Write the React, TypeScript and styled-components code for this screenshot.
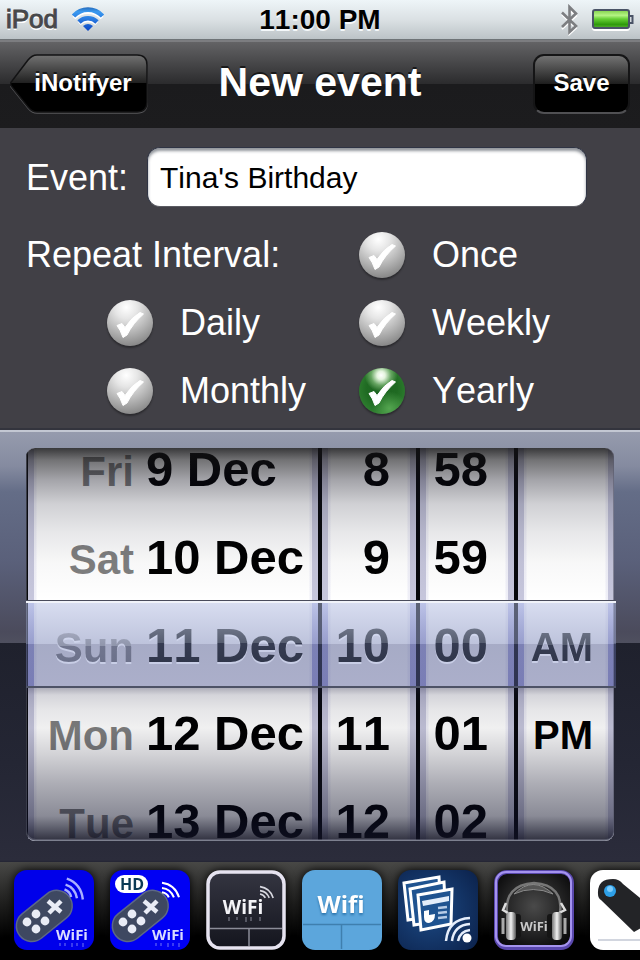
import React, { useState } from "react";
import styled, { createGlobalStyle } from "styled-components";

const GlobalStyle = createGlobalStyle`
  *, *::before, *::after { box-sizing: border-box; }
  body {
    margin: 0;
    background: #000;
    font-family: "Liberation Sans", Arial, Helvetica, sans-serif;
    font-kerning: none;
  }
  button, input { font: inherit; font-kerning: none; }
`;

const Screen = styled.main`
  display: flex;
  flex-direction: column;
  min-height: 100vh;
  overflow: hidden;
`;

/* ---------- status bar ---------- */

const StatusBar = styled.header`
  display: grid;
  grid-template-columns: 1fr auto 1fr;
  align-items: center;
  height: 40px;
  padding: 0 6px 0;
  background: linear-gradient(#eef5f8, #dbe1e4 50%, #bcc3c7);
  border-bottom: 1px solid #6f7477;
`;

const Carrier = styled.div`
  display: flex;
  align-items: center;
  gap: 13px;
  font-size: 26px;
  color: #47484a;
  -webkit-text-stroke: 1px #47484a;
  text-shadow: 0 2px 0 #fff;
`;

const Clock = styled.time`
  font-size: 28px;
  font-weight: bold;
  color: #000;
  text-shadow: 0 2px 0 #f4f8fa;
`;

const Indicators = styled.div`
  display: flex;
  justify-content: flex-end;
  align-items: center;
  gap: 13px;
`;

/* ---------- navigation bar ---------- */

const NavBar = styled.nav`
  display: grid;
  grid-template-columns: 1fr auto 1fr;
  align-items: center;
  height: 88px;
  padding: 0 10px 2px;
  background: linear-gradient(#636365, #2b2b2d 42px, #1b1b1d 42px, #1c1c1e);
  border-top: 2px solid #7c7d80;
`;

const NavTitle = styled.h1`
  margin: 0;
  padding-bottom: 5px;
  font-size: 41px;
  line-height: 48px;
  color: #fff;
  text-shadow: 0 -2px 0 rgba(0, 0, 0, 0.6);
`;

const NavButton = styled.button`
  height: 60px;
  border: 0;
  font-size: 24px;
  font-weight: bold;
  color: #fff;
  text-shadow: 0 -2px 0 rgba(0, 0, 0, 0.6);
  cursor: pointer;
`;

const BackButton = styled(NavButton)`
  position: relative;
  justify-self: start;
  width: 138px;
  padding: 0 16px 2px 24px;
  background: none;
`;

const BackShape = styled.svg`
  position: absolute;
  inset: 0;
  z-index: -1;
`;

const BackLayer = styled.div`
  isolation: isolate;
`;

const SaveButton = styled(NavButton)`
  justify-self: end;
  width: 97px;
  padding: 0 0 2px;
  border: 2px solid #151516;
  border-bottom-color: #505053;
  border-radius: 11px;
  background: linear-gradient(#727272, #1e1e1e 50%, #000 50%, #000);
`;

/* ---------- form ---------- */

const Form = styled.form`
  display: flex;
  flex-direction: column;
  gap: 14px;
  padding: 19px 26px 5px;
  background: #414046;
  color: #fff;
  font-size: 36px;
`;

const EventRow = styled.div`
  display: flex;
  align-items: center;
  padding-right: 27px;
`;

const EventLabel = styled.label`
  width: 121px;
  padding-top: 2px;
`;

const EventInput = styled.input`
  flex: 1;
  min-width: 0;
  height: 60px;
  padding: 2px 12px 0;
  border: 1px solid #2f3444;
  border-bottom-color: #5a5b62;
  border-radius: 13px;
  background: #fff;
  box-shadow: inset 0 3px 3px rgba(40, 48, 60, 0.5);
  font-size: 30px;
  color: #000;
  outline: none;
`;

const IntervalGrid = styled.div`
  display: grid;
  grid-template-columns: 333fr 255fr;
  grid-auto-rows: 68px;
  align-items: center;
`;

const Option = styled.label<{ $indent?: boolean }>`
  display: flex;
  align-items: center;
  gap: 27px;
  padding-left: ${(p) => (p.$indent ? 81 : 0)}px;
  cursor: pointer;
`;

const Ball = styled.span`
  display: grid;
  width: 46px;
  height: 46px;
  & > * { grid-area: 1 / 1; }
`;

const BallInput = styled.input`
  appearance: none;
  width: 46px;
  height: 46px;
  margin: 0;
  border-radius: 50%;
  background: radial-gradient(circle at 42% 16%, #fff 0, #e6e6e6 24%, #b9b9b9 52%, #8c8c8c 80%, #777 100%);
  box-shadow: 0 2px 2px rgba(0, 0, 0, 0.35);
  cursor: pointer;
  &:checked {
    background:
      radial-gradient(circle at 48% 16%, #fff 0, #e4f4de 9%, rgba(150, 205, 140, 0.6) 22%, transparent 36%),
      radial-gradient(circle at 66% 88%, #54a650 0, transparent 34%),
      radial-gradient(circle at 50% 45%, #1d6420 0, #1f6a22 45%, #2d7c2e 72%, #1b561f 100%);
  }
`;

const Check = styled.svg`
  width: 46px;
  height: 46px;
  pointer-events: none;
`;

/* ---------- picker ---------- */

const Picker = styled.section`
  padding: 16px 26px 21px;
  border-top: 2px solid #c3c7d2;
  background:
    linear-gradient(#969bad 0, #858ba0 34px, #646d87 60px, #5a607a 130px, #4b4b5c 200px, #4f505f 211px, #1f212d 211px, #242634 330px, #2b2c3b 428px, #232433 430px);
  box-shadow: 0 -2px 0 #33343d;
`;

const Wheels = styled.div`
  position: relative;
  isolation: isolate;
  margin-right: -2px;
`;

const Columns = styled.div`
  display: grid;
  grid-template-columns: 290fr 94fr 94fr 96fr;
  gap: 4px;
  height: 393px;
  margin-right: 2px;
  padding-left: 2px;
  overflow: hidden;
  border-radius: 9px;
  background: #07080c;
`;

const Shade = styled.div`
  position: absolute;
  inset: 0 2px 0 0;
  z-index: 1;
  border-radius: 9px;
  border-bottom: 1px solid #7d808f;
  box-shadow: inset 1px -1px 0 rgba(150, 152, 170, 0.35), inset -1px 0 0 rgba(90, 92, 110, 0.6);
  pointer-events: none;
  background:
    linear-gradient(
      rgba(18, 18, 20, 0.84) 0,
      rgba(20, 20, 24, 0.6) 12px,
      rgba(16, 16, 30, 0.38) 32px,
      rgba(20, 22, 40, 0.2) 56px,
      rgba(20, 22, 40, 0.1) 84px,
      rgba(20, 20, 30, 0.03) 115px,
      rgba(20, 20, 30, 0) 152px,
      rgba(30, 30, 60, 0) 239px,
      rgba(30, 30, 60, 0.36) 240px,
      rgba(20, 20, 50, 0.18) 247px,
      rgba(10, 10, 30, 0.1) 262px,
      rgba(0, 0, 10, 0.06) 280px,
      rgba(10, 10, 30, 0.18) 306px,
      rgba(16, 17, 40, 0.34) 335px,
      rgba(10, 12, 36, 0.48) 368px,
      rgba(14, 16, 36, 0.7) 382px,
      rgba(16, 17, 34, 0.86) 392px
    );
`;

const Band = styled.div`
  position: absolute;
  left: 0;
  right: 0;
  top: 153px;
  height: 87px;
  z-index: 2;
  border-top: 2px solid #f1f3fa;
  border-bottom: 2px solid #4d5266;
  box-shadow: 0 -1px 0 #4a4c5c;
  pointer-events: none;
  background: linear-gradient(
    rgba(177, 187, 225, 0.5) 0,
    rgba(142, 152, 194, 0.58) 41px,
    rgba(85, 94, 145, 0.52) 41px,
    rgba(88, 95, 150, 0.5) 100%
  );
`;

const edge =
  "linear-gradient(#c6c6dc 152px, #c9cdf0 153px, #a8a8dc 194px, #9b9bd6 239px, #c6c6dc 240px)";

const Column = styled.ul`
  min-width: 0;
  height: 393px;
  margin: 0;
  padding: 0 6px;
  list-style: none;
  background:
    ${edge} left / 6px 100% no-repeat,
    ${edge} right / 6px 100% no-repeat,
    linear-gradient(90deg, #f0f0f8 8px, #fff 9px, #fff calc(100% - 9px), #f0f0f8 calc(100% - 8px));
`;

const WheelItem = styled.li<{ $half?: boolean }>`
  display: flex;
  justify-content: flex-end;
  align-items: baseline;
  height: 88px;
  padding-top: ${(p) => (p.$half ? 2 : 0)}px;
  padding-right: ${(p) => (p.$half ? 15 : 20)}px;
  line-height: 88px;
  font-size: ${(p) => (p.$half ? 40 : 49)}px;
  font-weight: bold;
  white-space: nowrap;
  color: #000;
  &:first-child { margin-top: -23px; }
  &[aria-selected="true"] {
    position: relative;
    z-index: 3;
    filter: drop-shadow(0 2px 0 rgba(214, 219, 242, 0.7));
  }
`;

const DateItem = styled(WheelItem)`
  justify-content: flex-start;
  gap: 12px;
  padding-right: 0;
`;

const Value = styled.span`
  display: block;
  [aria-selected="true"] > & {
    color: transparent;
    background: linear-gradient(#6c7386 28px, #565d70 42px, #363c52 42px, #30364a 62px);
    background-clip: text;
    -webkit-background-clip: text;
  }
`;

const Day = styled.span`
  display: block;
  width: 100px;
  font-size: 42px;
  text-align: right;
  color: rgba(0, 0, 0, 0.5);
  [aria-selected="true"] > & {
    color: transparent;
    background: linear-gradient(#a3a8bd 28px, #8f95ab 42px, #71768f 42px, #6b7089 62px);
    background-clip: text;
    -webkit-background-clip: text;
  }
`;

/* ---------- app strip ---------- */

const Strip = styled.footer`
  display: flex;
  flex: 1;
  gap: 16px;
  min-height: 98px;
  padding: 8px 0 10px 14px;
  overflow: hidden;
  background: linear-gradient(#484846, #20201f 40px, #000 76px);
`;

const AppLink = styled.a`
  flex: none;
  width: 80px;
  height: 80px;
  border-radius: 13px;
  filter: drop-shadow(0 0 5px #000);
  & > svg { display: block; }
`;

const IconText = styled.text<{ $shadow?: string }>`
  font-family: "Open Sans", "Liberation Sans", sans-serif;
  font-weight: 700;
  text-anchor: middle;
  filter: ${(p) => (p.$shadow ? `drop-shadow(0 2px 1px ${p.$shadow})` : "none")};
`;

/* ---------- drawings ---------- */

const WifiGlyph = () => (
  <svg width="34" height="26" viewBox="0 0 34 26" aria-label="Wi-Fi">
    <defs>
      <linearGradient id="wifi" x1="0" y1="0" x2="0" y2="24" gradientUnits="userSpaceOnUse">
        <stop offset="0" stopColor="#2468b8" />
        <stop offset=".2" stopColor="#3b9af0" />
        <stop offset="1" stopColor="#0a45c4" />
      </linearGradient>
    </defs>
    <g transform="translate(1 2)" fill="none" stroke="#fff" strokeWidth="4">
      <path d="M2 9C9.500 1 22.500 1 30 9M7.300 14.500C12 10 20 10 24.700 14.500" />
    </g>
    <g transform="translate(1 0)">
      <g fill="none" stroke="url(#wifi)" strokeWidth="4.600">
        <path d="M1.500 9C9.500 0.500 22.500 0.500 30.500 9" />
        <path d="M7 15C12 10 20 10 25 15" />
      </g>
      <path d="M11 19Q16 15 21 19L16 24Z" fill="url(#wifi)" />
    </g>
  </svg>
);

const BluetoothGlyph = () => (
  <svg width="19" height="32" viewBox="0 0 19 32" aria-label="Bluetooth">
    <path d="M2 9.500 16 23 9.500 29V5L16 11 2 24" transform="translate(0 1)" fill="none" stroke="#fff" strokeWidth="2" />
    <path d="M2 8.500 16 22 9.500 28V3L16 9.500 2 23" fill="none" stroke="#7c7e81" strokeWidth="2.600" />
  </svg>
);

const BatteryGlyph = () => (
  <svg width="42" height="22" viewBox="0 0 42 22" aria-label="Battery full">
    <defs>
      <linearGradient id="bat" x1="0" y1="0" x2="0" y2="1">
        <stop offset="0" stopColor="#7fd048" />
        <stop offset=".3" stopColor="#b4f383" />
        <stop offset=".5" stopColor="#66cf34" />
        <stop offset=".8" stopColor="#2f9a0c" />
        <stop offset="1" stopColor="#56b030" />
      </linearGradient>
    </defs>
    <rect x="1" y="3" width="36" height="18" rx="2" fill="none" stroke="#fff" strokeWidth="2" />
    <rect x="1" y="1" width="36" height="18" rx="2" fill="url(#bat)" stroke="#4a5366" strokeWidth="2" />
    <path d="M38 7h2.500v7H38" fill="#d5dade" stroke="#4a5366" strokeWidth="2" />
  </svg>
);

const CheckMark = () => (
  <Check viewBox="0 0 46 46" aria-hidden="true">
    <path d="M10 25.500 15 23.500 18 27.500Q25 17 33 12.500L36.500 14Q26 23 20 35L16 37.500Q13.500 30 10 25.500Z" fill="#fff" stroke="#fff" strokeLinejoin="round" />
  </Check>
);

const Waves = ({ x, y, s = 1, color = "#fff" }: { x: number; y: number; s?: number; color?: string }) => (
  <g transform={`translate(${x} ${y}) scale(${s})`} fill="none" stroke={color} strokeWidth="2.400">
    <path d="M0 1Q15 3 20 18" />
    <path d="M0 7Q10 8 14 18" />
    <path d="M0 12Q6 13 8 18" />
  </g>
);

const Gamepad = () => (
  <g>
    <g transform="rotate(-39 31 46)">
      <rect x="-1" y="30" width="63" height="31" rx="15.500" fill="#3e4861" stroke="#5d6886" strokeWidth="1.500" />
    </g>
    <path d="M34 31 47 42M47 31 35 43" stroke="#e9ecf6" strokeWidth="4.500" />
    <g fill="#e9ecf6">
      <circle cx="22" cy="44" r="4.400" />
      <circle cx="13" cy="52" r="4.400" />
      <circle cx="31" cy="51" r="4.400" />
      <circle cx="22" cy="59" r="4.400" />
    </g>
  </g>
);

const RemoteIcon = ({ hd }: { hd?: boolean }) => (
  <svg width="80" height="80" viewBox="0 0 80 80">
    <rect width="80" height="80" rx="13" fill={hd ? "#0000f4" : "#0000ea"} />
    <Gamepad />
    {hd ? (
      <>
        <Waves x={52} y={12} s={0.85} />
        <rect x="5" y="5" width="33" height="18" rx="9" fill="#fff" />
        <IconText x="22" y="20" fontSize="16" fill="#0b3a55">HD</IconText>
      </>
    ) : (
      <g transform="rotate(12 58 18)"><Waves x={51} y={9} color="#aab0ff" /></g>
    )}
    <IconText x="58" y="70" fontSize="15" fill="#d9dcff">WiFi</IconText>
    <path d="M46 73v3M51 73v3M58 73v4M63 73v3M69 73v4" stroke="#8085f5" strokeWidth="1.500" opacity=".6" />
  </svg>
);

const TrackpadIcon = () => (
  <svg width="80" height="80" viewBox="0 0 80 80">
    <defs>
      <linearGradient id="pad" x1="0" y1="0" x2="0" y2="1">
        <stop offset="0" stopColor="#343541" />
        <stop offset="1" stopColor="#14151e" />
      </linearGradient>
    </defs>
    <rect x="2" y="2" width="76" height="76" rx="12" fill="url(#pad)" stroke="#e6e3f0" strokeWidth="3.500" />
    <path d="M4 58.500H76M43 59V76" stroke="#8b8c98" strokeWidth="1.500" />
    <IconText x="37" y="44" fontSize="19" fill="#f4f4f8">WiFi</IconText>
    <path d="M23 47v4M31 47v3M40 47v5M45 47v4M54 47v4" stroke="#8d8e9c" strokeWidth="2" opacity=".5" />
    <Waves x={54} y={16} s={0.66} color="#d8d8e0" />
  </svg>
);

const WifiPadIcon = () => (
  <svg width="80" height="80" viewBox="0 0 80 80">
    <rect width="80" height="80" rx="13" fill="#5ca6dc" />
    <path d="M1 54.500H79M39.500 55V79" stroke="#3f7fae" strokeWidth="1.500" />
    <IconText x="39" y="43" fontSize="24" fill="#fff" $shadow="#2e76ad">Wifi</IconText>
  </svg>
);

const SlidesIcon = () => (
  <svg width="80" height="80" viewBox="0 0 80 80">
    <defs>
      <radialGradient id="sl" cx=".4" cy=".5" r=".7">
        <stop offset="0" stopColor="#1c4a85" />
        <stop offset="1" stopColor="#0d2550" />
      </radialGradient>
    </defs>
    <rect width="80" height="80" rx="13" fill="url(#sl)" />
    <g fill="#1f5390" stroke="#fff" strokeWidth="3">
      <path d="M6 13 41 7 43 45 10 50Z" />
      <path d="M12 19 46 12 48 50 16 55Z" />
      <path d="M20 25 54 19 53 54 23 60Z" />
    </g>
    <path d="M24 31 51 26V31L25 36Z" fill="#e3edfa" />
    <path d="M26 41 31 40V45L37 44Q37 52 31 53Q26 53 26 47Z" fill="#fff" />
    <path d="M40 38 49 37M40 43 49 42M40 48 49 47" stroke="#b6cbe6" strokeWidth="2.500" />
    <g fill="none" stroke="#e6eefb" strokeWidth="2.500">
      <path d="M48 71Q50 49 72 48" />
      <path d="M54 71Q56 55 72 54" />
      <path d="M60 71Q62 61 72 60" />
    </g>
    <circle cx="69" cy="68" r="4.500" fill="#fff" />
  </svg>
);

const HeadphonesIcon = () => (
  <svg width="80" height="80" viewBox="0 0 80 80">
    <defs>
      <radialGradient id="hp" cx=".5" cy=".45" r=".6">
        <stop offset="0" stopColor="#4a4a4a" />
        <stop offset="1" stopColor="#0b0b0c" />
      </radialGradient>
      <linearGradient id="cup">
        <stop offset="0" stopColor="#777" />
        <stop offset=".5" stopColor="#f2f2f2" />
        <stop offset="1" stopColor="#555" />
      </linearGradient>
    </defs>
    <rect x="2" y="2" width="76" height="76" rx="11" fill="url(#hp)" stroke="#5a48ae" strokeWidth="4" />
    <rect x="2" y="2" width="75" height="74" rx="10" fill="none" stroke="#a493ee" strokeWidth="2" />
    <path d="M13 44Q10 15 40 13Q70 15 66 44" fill="none" stroke="#777" strokeWidth="2.500" />
    <path d="M20 24Q39 5 59 24Q39 15 20 24Z" fill="#555" stroke="#8a8a8a" />
    <path d="M12 33 9 40 14 43M67 33 71 40 65 43" fill="none" stroke="#ddd" strokeWidth="2.500" />
    <rect x="20" y="44" width="7" height="24" rx="3" fill="#151515" />
    <rect x="53" y="44" width="7" height="24" rx="3" fill="#151515" />
    <rect x="12" y="42" width="10" height="28" rx="4" fill="url(#cup)" />
    <rect x="58" y="42" width="10" height="28" rx="4" fill="url(#cup)" />
    <path d="M9 48V64M71 48V64" stroke="#aaa" strokeWidth="3" />
    <IconText x="40" y="61" fontSize="13" fill="#c9c9c9">WiFi</IconText>
  </svg>
);

const PointerIcon = () => (
  <svg width="80" height="80" viewBox="0 0 80 80">
    <rect width="80" height="80" rx="13" fill="#fff" />
    <path d="M8 70H80" stroke="#c3c9d4" strokeWidth="1.500" />
    <path d="M8 24Q7 9 23 9Q29 9 33 14L72 46L44 62 11 30Q8 28 8 24Z" fill="#232427" />
    <circle cx="20" cy="21" r="6" fill="#2ea0e8" />
    <circle cx="20" cy="19" r="3" fill="#7dcbfa" />
  </svg>
);

/* ---------- data ---------- */

const INTERVALS = ["Once", "Daily", "Weekly", "Monthly", "Yearly"];
const DATES = [
  ["Fri", "9 Dec"],
  ["Sat", "10 Dec"],
  ["Sun", "11 Dec"],
  ["Mon", "12 Dec"],
  ["Tue", "13 Dec"],
];
const HOURS = ["8", "9", "10", "11", "12"];
const MINUTES = ["58", "59", "00", "01", "02"];
const HALVES = ["", "", "AM", "PM"];
const APPS = [
  { name: "Game remote", icon: <RemoteIcon /> },
  { name: "Game remote HD", icon: <RemoteIcon hd /> },
  { name: "Trackpad", icon: <TrackpadIcon /> },
  { name: "Wifi pad", icon: <WifiPadIcon /> },
  { name: "Slides", icon: <SlidesIcon /> },
  { name: "Headphones", icon: <HeadphonesIcon /> },
  { name: "Pointer", icon: <PointerIcon /> },
];

export default function App() {
  const [title, setTitle] = useState("Tina's Birthday");
  const [interval, setRepeat] = useState("Yearly");

  return (
    <Screen>
      <GlobalStyle />
      <StatusBar>
        <Carrier>iPod <WifiGlyph /></Carrier>
        <Clock>11:00 PM</Clock>
        <Indicators>
          <BluetoothGlyph />
          <BatteryGlyph />
        </Indicators>
      </StatusBar>

      <NavBar>
        <BackLayer>
          <BackButton type="button">
            <BackShape width="138" height="60" viewBox="0 0 138 60" aria-hidden="true">
              <defs>
                <linearGradient id="back" x1="0" y1="0" x2="0" y2="1">
                  <stop offset="0" stopColor="#727272" />
                  <stop offset=".5" stopColor="#1e1e1e" />
                  <stop offset=".5" stopColor="#000" />
                  <stop offset="1" stopColor="#000" />
                </linearGradient>
              </defs>
              <path d="M27 3H127Q137 3 137 13V49Q137 59 127 59H27Q22 59 18 54L2 34Q-1 31 2 28L18 8Q22 3 27 3Z" fill="none" stroke="#58585b" strokeWidth="1.500" />
              <path d="M27 1H127Q137 1 137 11V48Q137 58 127 58H27Q22 58 18 53L2 33Q-1 30 2 27L18 6Q22 1 27 1Z" fill="url(#back)" stroke="#131314" strokeWidth="1.500" />
            </BackShape>
            iNotifyer
          </BackButton>
        </BackLayer>
        <NavTitle>New event</NavTitle>
        <SaveButton type="submit" form="event-form">Save</SaveButton>
      </NavBar>

      <Form id="event-form" onSubmit={(e) => e.preventDefault()}>
        <EventRow>
          <EventLabel htmlFor="event-title">Event:</EventLabel>
          <EventInput id="event-title" value={title} onChange={(e) => setTitle(e.target.value)} />
        </EventRow>
        <IntervalGrid role="radiogroup" aria-labelledby="interval-label">
          <span id="interval-label">Repeat Interval:</span>
          {INTERVALS.map((name, i) => (
            <Option key={name} $indent={i % 2 === 1}>
              <Ball>
                <BallInput
                  type="radio"
                  name="interval"
                  checked={interval === name}
                  onChange={() => setRepeat(name)}
                />
                <CheckMark />
              </Ball>
              {name}
            </Option>
          ))}
        </IntervalGrid>
      </Form>

      <Picker aria-label="Date and time">
        <Wheels>
          <Columns>
            <Column role="listbox" aria-label="Date">
              {DATES.map(([day, date], i) => (
                <DateItem key={date} role="option" aria-selected={i === 2}>
                  <Day>{day}</Day>
                  <Value>{date}</Value>
                </DateItem>
              ))}
            </Column>
            <Column role="listbox" aria-label="Hour">
              {HOURS.map((h, i) => (
                <WheelItem key={h} role="option" aria-selected={i === 2}><Value>{h}</Value></WheelItem>
              ))}
            </Column>
            <Column role="listbox" aria-label="Minute">
              {MINUTES.map((m, i) => (
                <WheelItem key={m} role="option" aria-selected={i === 2}><Value>{m}</Value></WheelItem>
              ))}
            </Column>
            <Column role="listbox" aria-label="AM or PM">
              {HALVES.map((h, i) => (
                <WheelItem key={i} $half role="option" aria-selected={i === 2}><Value>{h}</Value></WheelItem>
              ))}
            </Column>
          </Columns>
          <Shade />
          <Band />
        </Wheels>
      </Picker>

      <Strip>
        {APPS.map((app) => (
          <AppLink key={app.name} href="#" aria-label={app.name}>{app.icon}</AppLink>
        ))}
      </Strip>
    </Screen>
  );
}
